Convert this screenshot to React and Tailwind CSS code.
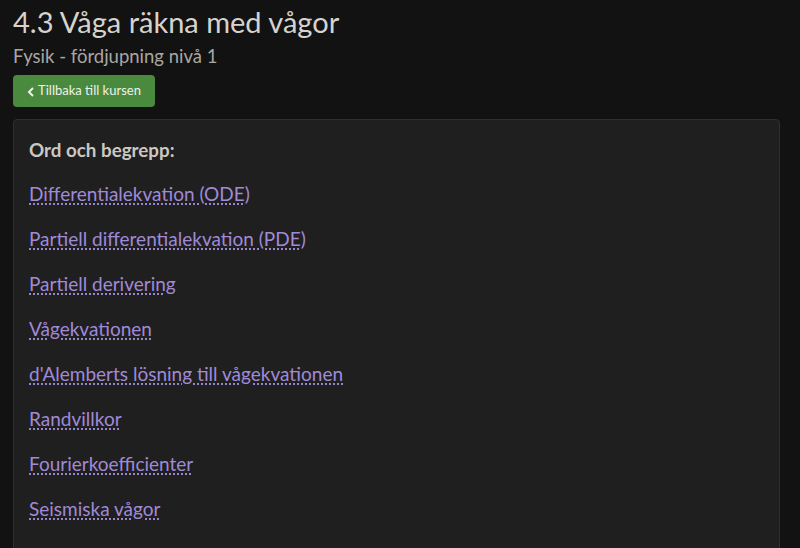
import React from 'react';

const terms = [
  'Differentialekvation (ODE)',
  'Partiell differentialekvation (PDE)',
  'Partiell derivering',
  'Vågekvationen',
  "d'Alemberts lösning till vågekvationen",
  'Randvillkor',
  'Fourierkoefficienter',
  'Seismiska vågor',
];

export default function App() {
  return (
    <div className="h-[548px] overflow-hidden bg-[#121212] px-[13px] pt-[4px] font-['Lato',sans-serif]">
      <h1 className="text-[29px] leading-[36px] text-[#d6d3ce] font-normal">4.3 Våga räkna med vågor</h1>
      <p className="mt-[5px] text-[18.5px] leading-[22px] text-[#a9a7a3]">Fysik - fördjupning nivå 1</p>
      <button className="mt-[8px] h-[32px] w-[142px] rounded-[4px] bg-[#4a8a3f] text-[13px] text-[#eef2ec] flex items-center justify-center gap-[3px]">
        <svg width="8" height="10" viewBox="0 0 8 10" className="mt-[1px]">
          <path d="M6 1 L2 5 L6 9" fill="none" stroke="#eef2ec" strokeWidth="2" />
        </svg>
        Tillbaka till kursen
      </button>
      <div className="mt-[12px] h-[500px] w-[767px] rounded-[4px] border border-[#2f2f2f] bg-[#1f1f1f] px-[15px] pt-[18px]">
        <h2 className="text-[18.8px] font-bold leading-[24px] text-[#cbc8c3]">Ord och begrepp:</h2>
        <ul className="mt-[20px] flex flex-col gap-[21px]">
          {terms.map((t) => (
            <li key={t} className="text-[19px] leading-[24px]">
              <a className="text-[#a08ad8] underline decoration-dotted decoration-[#a08ad8] underline-offset-[3px]">{t}</a>
            </li>
          ))}
        </ul>
      </div>
    </div>
  );
}
